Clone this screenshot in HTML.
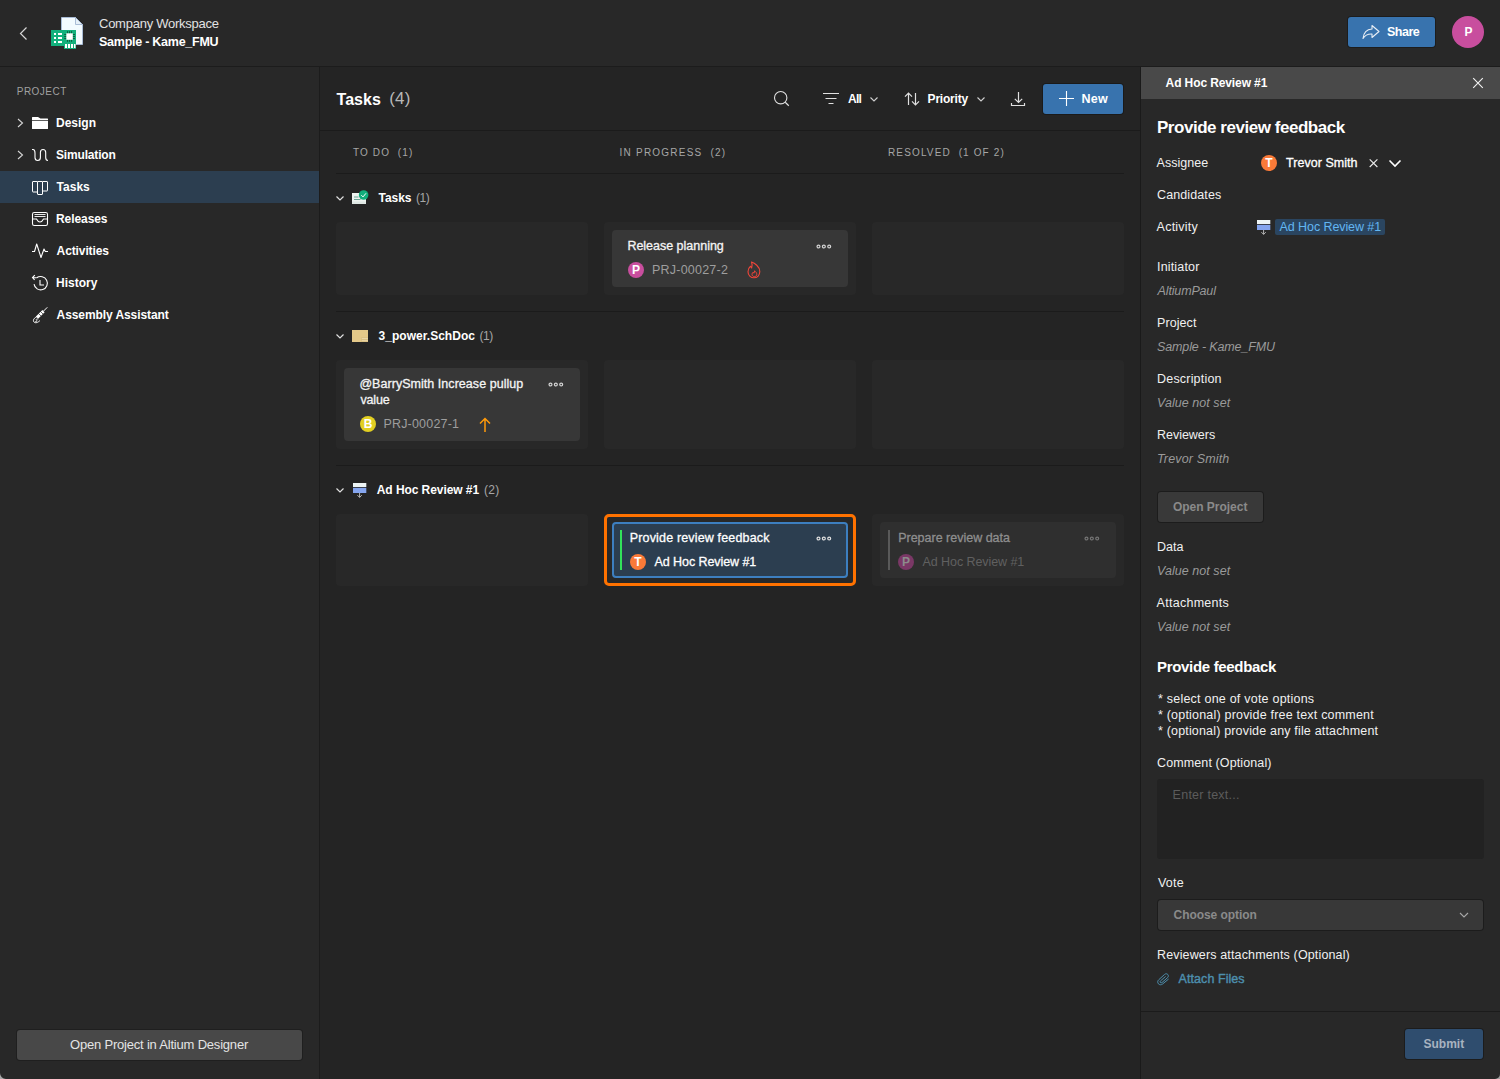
<!DOCTYPE html>
<html lang="en">
<head>
<meta charset="utf-8">
<title>Tasks - Sample - Kame_FMU</title>
<style>
*{box-sizing:border-box;margin:0;padding:0}
html,body{width:1500px;height:1079px;overflow:hidden;background:#282828}
body{font-family:"Liberation Sans",sans-serif;font-size:13px;color:#fff;position:relative}
.a{position:absolute}
.t{position:absolute;white-space:nowrap;line-height:16px;height:16px}
.lane{position:absolute;width:252px;background:#282828;border-radius:4px}
.card{position:absolute;width:236px;background:#373737;border-radius:4px}
.av{position:absolute;width:16px;height:16px;border-radius:50%}
.hl{position:absolute;height:1px;background:#1b1b1b}
</style>
</head>
<body>
<div id="bg">
<div class="a" style="left:0px;top:0px;width:1500px;height:66px;background:#282828;"></div>
<div class="a" style="left:0px;top:66px;width:1500px;height:1px;background:#1c1c1c;"></div>
<div class="a" style="left:0px;top:67px;width:319px;height:1012px;background:#282828;"></div>
<div class="a" style="left:319px;top:67px;width:1px;height:1012px;background:#1c1c1c;"></div>
<div class="a" style="left:320px;top:67px;width:820px;height:1012px;background:#242424;"></div>
<div class="a" style="left:1140px;top:67px;width:1px;height:1012px;background:#1a1a1a;"></div>
<div class="a" style="left:1141px;top:67px;width:359px;height:1012px;background:#282828;"></div>
</div>
<header aria-label="Project header">
<svg class="a" style="left:16px;top:23px" width="16" height="20" viewBox="0 0 16 20"><path d="M10.5 4.5 L4.5 10.5 L10.5 16.5" fill="none" stroke="#d6d6d6" stroke-width="1.2"/></svg>
<svg class="a" style="left:50px;top:16px" width="34" height="34" viewBox="0 0 34 34"><path d="M11.5 1.500 H25.500 L32.500 8.500 V28.500 H11.500 Z" fill="#f3fbff" stroke="#a9bcd6" stroke-width="1"/>
<path d="M25.500 1.500 V8.500 H32.500 Z" fill="#e6f0f8" stroke="#a9bcd6" stroke-width="1" stroke-linejoin="round"/>
<path d="M1 14 H26 V33 H14 V30 H1 Z" fill="#12b07c"/>
<rect x="4" y="17" width="2" height="2" fill="#fff"/><rect x="8" y="17" width="4" height="2" fill="#fff"/>
<rect x="4" y="21" width="2" height="2" fill="#fff"/><rect x="8" y="21" width="4" height="2" fill="#fff"/>
<rect x="4" y="25" width="2" height="2" fill="#fff"/><rect x="8" y="25" width="4" height="2" fill="#fff"/>
<path d="M17.500 15.200v10.600M19.500 15.200v10.600M21.500 15.200v10.600M14.200 18.500h10.800M14.200 20.500h10.800M14.200 22.500h10.800" stroke="#0b5f42" stroke-width="1"/>
<rect x="16.300" y="17.300" width="6.500" height="6.500" fill="#fff"/>
<path d="M15 28h2v4h-2zM18 28h2v4h-2zM21 28h2v4h-2zM24 28h1.500v4H24z" fill="#fff"/></svg>
<div class="a" style="left:1348px;top:17px;width:87px;height:30px;background:#3873ae;border-radius:3px;box-shadow:0 0 0 1px rgba(0,0,0,.28);"></div>
<svg class="a" style="left:1361px;top:23px" width="20" height="18" viewBox="0 0 20 18"><path d="M11 2.500 L18 8.500 L11 14.500 V11 C6.500 10.800 3.800 12.300 2 15.500 C2.600 9.800 5.800 6.300 11 6 Z" fill="none" stroke="#e8eef5" stroke-width="1.100" stroke-linejoin="round"/></svg>
<div class="a" style="left:1452px;top:16px;width:32px;height:32px;background:#c84e9e;border-radius:50%;"></div>
<div class="t" id="t0" style="left:99.00px;top:16.3px;font-size:13px;color:#e2e2e2;letter-spacing:-0.250px;">Company Workspace</div>
<div class="t" id="t1" style="left:99.00px;top:34.3px;font-size:12.5px;color:#fff;font-weight:bold;letter-spacing:-0.250px;">Sample - Kame_FMU</div>
<div class="t" id="t2" style="left:1387.00px;top:24.0px;font-size:12.5px;color:#fff;font-weight:bold;letter-spacing:-0.500px;">Share</div>
<div class="t" id="t3" style="left:1452.50px;top:24.0px;font-size:12px;color:#fff;font-weight:bold;width:32px;text-align:center;">P</div>
</header>
<nav aria-label="Project navigation">
<div class="a" style="left:0px;top:171px;width:319px;height:32px;background:#2c3e50;"></div>
<svg class="a" style="left:15px;top:117px" width="10" height="12" viewBox="0 0 10 12"><path d="M3 2 L7.500 6 L3 10" fill="none" stroke="#d6d6d6" stroke-width="1.1"/></svg>
<svg class="a" style="left:30px;top:113px" width="20" height="20" viewBox="0 0 20 20"><path d="M2 4.500 Q2 4 2.500 4 H8 L10.500 5.600 H17.500 Q18 5.600 18 6.100 V7.200 H2 Z" fill="#fff"/><path d="M2 8 H18 V15.500 Q18 16 17.500 16 H2.500 Q2 16 2 15.500 Z" fill="#fff"/></svg>
<svg class="a" style="left:15px;top:149px" width="10" height="12" viewBox="0 0 10 12"><path d="M3 2 L7.500 6 L3 10" fill="none" stroke="#d6d6d6" stroke-width="1.1"/></svg>
<svg class="a" style="left:30px;top:145px" width="20" height="20" viewBox="0 0 20 20"><path d="M2 4.500 H3 C4.800 4.500 5 6 5 8 V12.500 C5 14.500 6 15.500 7.700 15.500 C9.400 15.500 10.400 14.500 10.400 12.500 V7.500 C10.400 5.500 11.400 4.500 13 4.500 C14.600 4.500 15.700 5.500 15.700 7.500 V12.500 C15.700 14.500 16.300 15.500 18 15.500" fill="none" stroke="#fff" stroke-width="1.100"/></svg>
<svg class="a" style="left:30px;top:177px" width="20" height="20" viewBox="0 0 20 20"><path d="M7.500 4.500 H3 Q2.500 4.500 2.500 5 V14.500 Q2.500 15 3 15 H7.500 M12.500 4.500 H17 Q17.500 4.500 17.500 5 V13.500 Q17.500 14 17 14 H12.500" fill="none" stroke="#fff" stroke-width="1"/><rect x="7.500" y="4.500" width="5" height="13" rx="0.500" fill="none" stroke="#fff" stroke-width="1"/></svg>
<svg class="a" style="left:30px;top:209px" width="20" height="20" viewBox="0 0 20 20"><rect x="2.500" y="3.500" width="15" height="13" rx="1.800" fill="none" stroke="#fff" stroke-width="1.100"/><path d="M4.500 5.500H15.500M4.500 7.500H15.500" fill="none" stroke="#fff" stroke-width="0.900"/><path d="M2.500 10 H6.500 C7.500 12 8.500 13 10 13 C11.500 13 12.500 12 13.500 10 H17.500" fill="none" stroke="#fff" stroke-width="1.100"/></svg>
<svg class="a" style="left:30px;top:241px" width="20" height="20" viewBox="0 0 20 20"><path d="M2 10.500 H4.500 L6.700 3 L11 16.500 L14 8 L15.300 10.500 H18" fill="none" stroke="#fff" stroke-width="1.100" stroke-linejoin="round"/></svg>
<svg class="a" style="left:30px;top:273px" width="20" height="20" viewBox="0 0 20 20"><path d="M6.700 4.800 A6.700 6.700 0 1 1 4.050 11.200" fill="none" stroke="#fff" stroke-width="1.100"/><path d="M2.500 4.500 L6.700 4.800 M4.800 2.200 L2.500 4.500 L4.600 6.800" fill="none" stroke="#fff" stroke-width="1.100"/><path d="M10 7 V12 H14" fill="none" stroke="#fff" stroke-width="1.100"/></svg>
<svg class="a" style="left:30px;top:305px" width="20" height="20" viewBox="0 0 20 20"><path d="M17.300 2.300 L13.500 6.100" stroke="#fff" stroke-width="1" fill="none"/><path d="M13.500 6.100 L7 12.600" stroke="#fff" stroke-width="3.200" fill="none"/><path d="M10.300 6.300 L13.300 9.300 M8.300 8.300 L11.300 11.300" stroke="#282828" stroke-width="0.700"/><path d="M7.500 11.500 C4 12.500 2.500 15.500 4 17 C5.500 18.500 8 17.500 10 15.500" fill="none" stroke="#fff" stroke-width="1"/><path d="M8.200 14.200 C7 13.500 5.500 14.500 6.500 15.300 C7.500 16 6.500 17 5.300 16.500" fill="none" stroke="#fff" stroke-width="0.900"/></svg>
<div class="a" style="left:17px;top:1030px;width:285px;height:30px;background:#484848;border-radius:3px;box-shadow:0 0 0 1px #1f1f1f;"></div>
<div class="t" id="t4" style="left:16.79px;top:84.2px;font-size:10px;color:#a0a0a0;letter-spacing:0.467px;">PROJECT</div>
<div class="t" id="t5" style="left:56.00px;top:114.8px;font-size:12px;color:#fff;font-weight:bold;">Design</div>
<div class="t" id="t6" style="left:56.00px;top:146.8px;font-size:12px;color:#fff;font-weight:bold;letter-spacing:-0.167px;">Simulation</div>
<div class="t" id="t7" style="left:56.60px;top:178.8px;font-size:12px;color:#fff;font-weight:bold;">Tasks</div>
<div class="t" id="t8" style="left:56.00px;top:210.8px;font-size:12px;color:#fff;font-weight:bold;letter-spacing:-0.071px;">Releases</div>
<div class="t" id="t9" style="left:56.60px;top:242.8px;font-size:12px;color:#fff;font-weight:bold;letter-spacing:-0.111px;">Activities</div>
<div class="t" id="t10" style="left:56.00px;top:274.8px;font-size:12px;color:#fff;font-weight:bold;">History</div>
<div class="t" id="t11" style="left:56.60px;top:306.8px;font-size:12px;color:#fff;font-weight:bold;letter-spacing:-0.088px;">Assembly Assistant</div>
<div class="t" id="t12" style="left:70.00px;top:1036.5px;font-size:13px;color:#e4e4e4;letter-spacing:-0.200px;">Open Project in Altium Designer</div>
</nav>
<main aria-label="Tasks board">
<div class="a" style="left:320px;top:130px;width:820px;height:1px;background:#1b1b1b;"></div>
<svg class="a" style="left:772px;top:89px" width="20" height="20" viewBox="0 0 20 20"><circle cx="8.700" cy="8.700" r="6.200" fill="none" stroke="#e0e0e0" stroke-width="1.100"/><path d="M13.200 13.200 L16.800 16.700" stroke="#e0e0e0" stroke-width="1.200"/></svg>
<svg class="a" style="left:821px;top:88px" width="20" height="20" viewBox="0 0 20 20"><path d="M2 5.500H18M4.500 10.500H15.500M7.500 15.500H12.500" stroke="#e0e0e0" stroke-width="1.100"/></svg>
<svg class="a" style="left:869px;top:94px" width="10" height="10" viewBox="0 0 10 10"><path d="M1.500 3.500 L5 7 L8.500 3.500" fill="none" stroke="#d0d0d0" stroke-width="1.100"/></svg>
<svg class="a" style="left:903px;top:89px" width="18" height="20" viewBox="0 0 18 20"><path d="M5.500 16V4M2 7.600 L5.500 4 L9 7.600M12.500 4V16M9 12.400 L12.500 16 L16 12.400" fill="none" stroke="#e0e0e0" stroke-width="1.200"/></svg>
<svg class="a" style="left:976px;top:94px" width="10" height="10" viewBox="0 0 10 10"><path d="M1.500 3.500 L5 7 L8.500 3.500" fill="none" stroke="#d0d0d0" stroke-width="1.100"/></svg>
<svg class="a" style="left:1009px;top:89px" width="18" height="20" viewBox="0 0 18 20"><path d="M9.500 3V13.500M5.800 9.800 L9.500 13.500 L13.200 9.800M2.500 14V16.500H15.500V14" fill="none" stroke="#e0e0e0" stroke-width="1.200"/></svg>
<div class="a" style="left:1043px;top:84px;width:80px;height:30px;background:#3873ae;border-radius:3px;box-shadow:0 0 0 1px rgba(0,0,0,.28);"></div>
<svg class="a" style="left:1058px;top:91px" width="17" height="16" viewBox="0 0 17 16"><path d="M8.500 0V15M1 7.500H16" stroke="#fff" stroke-width="1.100"/></svg>
<div class="a" style="left:336px;top:173px;width:788px;height:1px;background:#1b1b1b;"></div>
<div class="a" style="left:336px;top:311px;width:788px;height:1px;background:#1b1b1b;"></div>
<div class="a" style="left:336px;top:465px;width:788px;height:1px;background:#1b1b1b;"></div>
<svg class="a" style="left:335px;top:192.5px" width="10" height="10" viewBox="0 0 10 10"><path d="M1.500 3.500 L5 7 L8.500 3.500" fill="none" stroke="#e0e0e0" stroke-width="1.200"/></svg>
<svg class="a" style="left:335px;top:330.5px" width="10" height="10" viewBox="0 0 10 10"><path d="M1.500 3.500 L5 7 L8.500 3.500" fill="none" stroke="#e0e0e0" stroke-width="1.200"/></svg>
<svg class="a" style="left:335px;top:484.5px" width="10" height="10" viewBox="0 0 10 10"><path d="M1.500 3.500 L5 7 L8.500 3.500" fill="none" stroke="#e0e0e0" stroke-width="1.200"/></svg>
<svg class="a" style="left:352px;top:189px" width="17" height="16" viewBox="0 0 17 16"><path d="M0 4H14V15H0Z" fill="#eef3f0"/><path d="M2 8H6.500M2 10.500H8.500" stroke="#6aa595" stroke-width="1.200"/><path d="M0 12.500H14V15H0Z" fill="#dfe8e4"/><circle cx="11.600" cy="6" r="4.800" fill="#12ad7b"/><path d="M9.300 6.200 L11 7.900 L14 4.300" fill="none" stroke="#fff" stroke-width="1"/></svg>
<svg class="a" style="left:352px;top:330px" width="17" height="12" viewBox="0 0 17 12"><rect x="0" y="0" width="16" height="12" fill="#e4c989"/><rect x="9.200" y="7.300" width="6.800" height="4.700" fill="#d9bf80"/><path d="M9.800 8.600H16M9.800 10.700H16" stroke="#efdcae" stroke-width="0.900"/></svg>
<svg class="a" style="left:352px;top:483px" width="15" height="15" viewBox="0 0 15 15"><rect x="1" y="0" width="13.300" height="4" fill="#eef5f5"/><rect x="1" y="4" width="13.300" height="1" fill="#39404f"/><rect x="1" y="5" width="13.300" height="5" fill="#85a5ee"/><path d="M7.600 10V14.300M5.400 12.200 L7.600 14.400 L9.800 12.200" fill="none" stroke="#b5b5b5" stroke-width="1"/></svg>
<div class="lane" style="left:336px;top:222px;height:73px"></div>
<div class="lane" style="left:336px;top:360px;height:89px"></div>
<div class="lane" style="left:336px;top:514px;height:72px"></div>
<div class="lane" style="left:604px;top:222px;height:73px"></div>
<div class="lane" style="left:604px;top:360px;height:89px"></div>
<div class="lane" style="left:604px;top:514px;height:72px"></div>
<div class="lane" style="left:872px;top:222px;height:73px"></div>
<div class="lane" style="left:872px;top:360px;height:89px"></div>
<div class="lane" style="left:872px;top:514px;height:72px"></div>
<div class="card" style="left:612px;top:230px;height:57px"></div>
<svg class="a" style="left:816.1px;top:243.5px" width="16" height="5" viewBox="0 0 16 5"><circle cx="2.500" cy="2.500" r="1.450" fill="none" stroke="#d4d4d4" stroke-width="1.200"/><circle cx="7.850" cy="2.500" r="1.450" fill="none" stroke="#d4d4d4" stroke-width="1.200"/><circle cx="13.200" cy="2.500" r="1.450" fill="none" stroke="#d4d4d4" stroke-width="1.200"/></svg>
<div class="a" style="left:628px;top:261.5px;width:16px;height:16px;background:#c84e9e;border-radius:50%;"></div>
<svg class="a" style="left:746px;top:260px" width="16" height="20" viewBox="0 0 16 20"><path d="M5.500 2 C8.500 3 13.800 6.500 13.800 11.500 C13.800 15.200 11.300 17.800 8 17.800 C4.700 17.800 2 15.200 2 11.800 C2 9.500 3 7.500 4.500 6.300 L5.600 8 C6.300 6 6.300 4 5.500 2 Z" fill="none" stroke="#f0453a" stroke-width="1.100" stroke-linejoin="round"/><path d="M8.600 10.800 C10 12 10.800 13 10.800 14.300 C10.800 15.800 9.600 16.600 8.400 16.600 C7 16.600 6 15.600 6 14.300 C6 13.400 6.500 12.600 7.200 12.200 L7.800 13.200 C8.300 12.500 8.600 11.700 8.600 10.800 Z" fill="none" stroke="#f0453a" stroke-width="1" stroke-linejoin="round"/></svg>
<div class="card" style="left:344px;top:368px;height:73px"></div>
<svg class="a" style="left:548.1px;top:381.8px" width="16" height="5" viewBox="0 0 16 5"><circle cx="2.500" cy="2.500" r="1.450" fill="none" stroke="#d4d4d4" stroke-width="1.200"/><circle cx="7.850" cy="2.500" r="1.450" fill="none" stroke="#d4d4d4" stroke-width="1.200"/><circle cx="13.200" cy="2.500" r="1.450" fill="none" stroke="#d4d4d4" stroke-width="1.200"/></svg>
<div class="a" style="left:360px;top:416px;width:16px;height:16px;background:#e2cf22;border-radius:50%;"></div>
<svg class="a" style="left:478px;top:416px" width="14" height="17" viewBox="0 0 14 17"><path d="M7 16V2.500M2 7.500 L7 2.500 L12 7.500" fill="none" stroke="#ff9a0a" stroke-width="1.500"/></svg>
<div class="a" style="left:604px;top:514px;width:252px;height:72px;background:transparent;border:3px solid #ff7200;border-radius:5px;"></div>
<div class="a" style="left:612px;top:522px;width:236px;height:56px;background:#2c3e50;border:2px solid #3d7fc0;border-radius:4px;"></div>
<div class="a" style="left:620px;top:530px;width:2.3px;height:40px;background:#32e35a;"></div>
<svg class="a" style="left:816.1px;top:535.5px" width="16" height="5" viewBox="0 0 16 5"><circle cx="2.500" cy="2.500" r="1.450" fill="none" stroke="#e0e0e0" stroke-width="1.200"/><circle cx="7.850" cy="2.500" r="1.450" fill="none" stroke="#e0e0e0" stroke-width="1.200"/><circle cx="13.200" cy="2.500" r="1.450" fill="none" stroke="#e0e0e0" stroke-width="1.200"/></svg>
<div class="a" style="left:630px;top:553.5px;width:16px;height:16px;background:#fa7a38;border-radius:50%;"></div>
<div class="card" style="left:880px;top:522px;height:56px;background:#2f2f2f"></div>
<div class="a" style="left:888px;top:530px;width:2px;height:40px;background:#5a5a5a;"></div>
<svg class="a" style="left:1084.1px;top:535.5px" width="16" height="5" viewBox="0 0 16 5"><circle cx="2.500" cy="2.500" r="1.450" fill="none" stroke="#757575" stroke-width="1.200"/><circle cx="7.850" cy="2.500" r="1.450" fill="none" stroke="#757575" stroke-width="1.200"/><circle cx="13.200" cy="2.500" r="1.450" fill="none" stroke="#757575" stroke-width="1.200"/></svg>
<div class="a" style="left:898px;top:553.5px;width:16px;height:16px;background:#7a3866;border-radius:50%;"></div>
<div class="t" id="t13" style="left:336.60px;top:89.6px;font-size:16px;color:#fff;line-height:20px;height:20px;font-weight:bold;">Tasks</div>
<div class="t" id="t14" style="left:389.19px;top:89.4px;font-size:17px;color:#b8b8b8;line-height:20px;height:20px;letter-spacing:0.200px;">(4)</div>
<div class="t" id="t15" style="left:848.00px;top:90.5px;font-size:12px;color:#fff;font-weight:bold;letter-spacing:-0.750px;">All</div>
<div class="t" id="t16" style="left:927.60px;top:90.5px;font-size:12px;color:#fff;font-weight:bold;letter-spacing:-0.214px;">Priority</div>
<div class="t" id="t17" style="left:1081.60px;top:90.5px;font-size:12.5px;color:#fff;font-weight:bold;letter-spacing:0.200px;">New</div>
<div class="t" id="t18" style="left:353.00px;top:145.4px;font-size:10px;color:#a6a6a6;letter-spacing:1.111px;white-space:pre;">TO DO  (1)</div>
<div class="t" id="t19" style="left:619.60px;top:145.4px;font-size:10px;color:#a6a6a6;letter-spacing:1.220px;white-space:pre;">IN PROGRESS  (2)</div>
<div class="t" id="t20" style="left:888.00px;top:145.4px;font-size:10px;color:#a6a6a6;letter-spacing:1.135px;white-space:pre;">RESOLVED  (1 OF 2)</div>
<div class="t" id="t21" style="left:378.60px;top:189.5px;font-size:12px;color:#fff;font-weight:bold;letter-spacing:-0.075px;">Tasks</div>
<div class="t" id="t22" style="left:416.00px;top:189.5px;font-size:12px;color:#a6a6a6;letter-spacing:-0.400px;">(1)</div>
<div class="t" id="t23" style="left:627.39px;top:237.5px;font-size:12.5px;color:#f4f4f4;letter-spacing:-0.013px;-webkit-text-stroke:0.3px;">Release planning</div>
<div class="t" id="t24" style="left:628.00px;top:261.5px;font-size:12px;color:#fff;font-weight:bold;width:16px;text-align:center;">P</div>
<div class="t" id="t25" style="left:652.00px;top:261.5px;font-size:12.5px;color:#9e9e9e;letter-spacing:0.220px;">PRJ-00027-2</div>
<div class="t" id="t26" style="left:378.60px;top:327.5px;font-size:12px;color:#fff;font-weight:bold;letter-spacing:0.023px;">3_power.SchDoc</div>
<div class="t" id="t27" style="left:479.39px;top:327.5px;font-size:12px;color:#a6a6a6;letter-spacing:-0.400px;">(1)</div>
<div class="t" id="t28" style="left:359.39px;top:375.8px;font-size:12.5px;color:#f4f4f4;letter-spacing:0.042px;-webkit-text-stroke:0.3px;">@BarrySmith Increase pullup</div>
<div class="t" id="t29" style="left:360.39px;top:391.6px;font-size:12.5px;color:#f4f4f4;letter-spacing:-0.125px;-webkit-text-stroke:0.3px;">value</div>
<div class="t" id="t30" style="left:360.00px;top:416.0px;font-size:12px;color:#fff;font-weight:bold;width:16px;text-align:center;">B</div>
<div class="t" id="t31" style="left:383.39px;top:416.0px;font-size:12.5px;color:#9e9e9e;letter-spacing:0.200px;">PRJ-00027-1</div>
<div class="t" id="t32" style="left:376.79px;top:481.5px;font-size:12px;color:#fff;font-weight:bold;letter-spacing:-0.073px;">Ad Hoc Review #1</div>
<div class="t" id="t33" style="left:484.00px;top:481.5px;font-size:12px;color:#a6a6a6;letter-spacing:0.350px;">(2)</div>
<div class="t" id="t34" style="left:629.79px;top:529.5px;font-size:12.5px;color:#fff;letter-spacing:0.159px;-webkit-text-stroke:0.3px;">Provide review feedback</div>
<div class="t" id="t35" style="left:630.00px;top:553.5px;font-size:12px;color:#fff;font-weight:bold;width:16px;text-align:center;">T</div>
<div class="t" id="t36" style="left:654.60px;top:553.5px;font-size:12.5px;color:#fff;letter-spacing:-0.080px;-webkit-text-stroke:0.3px;">Ad Hoc Review #1</div>
<div class="t" id="t37" style="left:898.19px;top:529.5px;font-size:12.5px;color:#8e8e8e;letter-spacing:-0.006px;-webkit-text-stroke:0.3px;">Prepare review data</div>
<div class="t" id="t38" style="left:898.00px;top:553.5px;font-size:12px;color:#8c8c8c;font-weight:bold;width:16px;text-align:center;">P</div>
<div class="t" id="t39" style="left:922.60px;top:553.5px;font-size:12.5px;color:#606060;letter-spacing:-0.080px;">Ad Hoc Review #1</div>
</main>
<aside aria-label="Task details">
<div class="a" style="left:1141px;top:67px;width:359px;height:32px;background:#494949;"></div>
<svg class="a" style="left:1471px;top:76px" width="14" height="14" viewBox="0 0 14 14"><path d="M2.200 2.200 L11.800 11.800 M11.800 2.200 L2.200 11.800" stroke="#f4f4f4" stroke-width="1.100"/></svg>
<div class="a" style="left:1261px;top:155px;width:16px;height:16px;background:#fa7a38;border-radius:50%;"></div>
<svg class="a" style="left:1367.5px;top:158px" width="11" height="11" viewBox="0 0 11 11"><path d="M1.700 1.300 L9.400 9 M9.400 1.300 L1.700 9" stroke="#ececec" stroke-width="1.100"/></svg>
<svg class="a" style="left:1388px;top:158px" width="14" height="11" viewBox="0 0 14 11"><path d="M1.500 2.500 L7 8 L12.500 2.500" fill="none" stroke="#fff" stroke-width="1.600"/></svg>
<svg class="a" style="left:1256px;top:220px" width="15" height="15" viewBox="0 0 15 15"><rect x="1" y="0" width="13.300" height="4" fill="#eef5f5"/><rect x="1" y="4" width="13.300" height="1" fill="#39404f"/><rect x="1" y="5" width="13.300" height="5" fill="#85a5ee"/><path d="M7.600 10V14.300M5.400 12.200 L7.600 14.400 L9.800 12.200" fill="none" stroke="#b5b5b5" stroke-width="1"/></svg>
<div class="a" style="left:1275px;top:219px;width:110px;height:16px;background:#2a4560;border-radius:2px;"></div>
<div class="a" style="left:1158px;top:492px;width:105px;height:30px;background:#393939;border-radius:3px;box-shadow:0 0 0 1px rgba(0,0,0,.28);"></div>
<div class="a" style="left:1157px;top:779px;width:327px;height:80px;background:#222222;border-radius:3px;"></div>
<div class="a" style="left:1158px;top:900px;width:325px;height:30px;background:#383838;border-radius:3px;box-shadow:0 0 0 1px rgba(0,0,0,.28);"></div>
<svg class="a" style="left:1459px;top:910px" width="10" height="10" viewBox="0 0 10 10"><path d="M1 3 L5 7 L9 3" fill="none" stroke="#a8a8a8" stroke-width="1.100"/></svg>
<svg class="a" style="left:1156px;top:972px" width="14" height="14" viewBox="0 0 14 14"><path d="M12.300 7.300 L6.600 12 C5.200 13.100 3.400 13 2.400 11.800 C1.400 10.600 1.500 8.900 2.700 7.800 L8.600 2.400 C9.600 1.500 11 1.600 11.800 2.500 C12.600 3.400 12.500 4.800 11.600 5.600 L5.900 10.600 C5.400 11 4.700 11 4.300 10.500 C3.900 10 4 9.400 4.400 9 L9.300 4.700" fill="none" stroke="#4d8fae" stroke-width="1" stroke-linecap="round"/></svg>
<div class="a" style="left:1141px;top:1011px;width:359px;height:1px;background:#1b1b1b;"></div>
<div class="a" style="left:1405px;top:1029px;width:78px;height:30px;background:#2f4d6e;border-radius:3px;box-shadow:0 0 0 1px rgba(0,0,0,.28);"></div>
<div class="t" id="t40" style="left:1165.60px;top:74.8px;font-size:12px;color:#fff;font-weight:bold;letter-spacing:-0.107px;">Ad Hoc Review #1</div>
<div class="t" id="t41" style="left:1157.00px;top:118.0px;font-size:17px;color:#fff;line-height:20px;height:20px;font-weight:bold;letter-spacing:-0.464px;">Provide review feedback</div>
<div class="t" id="t42" style="left:1156.60px;top:154.8px;font-size:12.5px;color:#f0f0f0;letter-spacing:0.029px;">Assignee</div>
<div class="t" id="t43" style="left:1261.00px;top:155.0px;font-size:12px;color:#fff;font-weight:bold;width:16px;text-align:center;">T</div>
<div class="t" id="t44" style="left:1286.00px;top:154.8px;font-size:12.5px;color:#fff;letter-spacing:0.036px;-webkit-text-stroke:0.3px;">Trevor Smith</div>
<div class="t" id="t45" style="left:1157.00px;top:186.8px;font-size:12.5px;color:#f0f0f0;letter-spacing:0.111px;">Candidates</div>
<div class="t" id="t46" style="left:1156.60px;top:218.8px;font-size:12.5px;color:#f0f0f0;letter-spacing:0.229px;">Activity</div>
<div class="t" id="t47" style="left:1279.60px;top:218.8px;font-size:12.5px;color:#62b6f2;letter-spacing:-0.087px;">Ad Hoc Review #1</div>
<div class="t" id="t48" style="left:1157.00px;top:258.8px;font-size:12.5px;color:#f0f0f0;letter-spacing:0.175px;">Initiator</div>
<div class="t" id="t49" style="left:1157.60px;top:282.8px;font-size:12.5px;color:#9a9a9a;font-style:italic;letter-spacing:-0.156px;">AltiumPaul</div>
<div class="t" id="t50" style="left:1157.00px;top:314.8px;font-size:12.5px;color:#f0f0f0;letter-spacing:0.083px;">Project</div>
<div class="t" id="t51" style="left:1157.00px;top:338.8px;font-size:12.5px;color:#9a9a9a;font-style:italic;letter-spacing:-0.131px;">Sample - Kame_FMU</div>
<div class="t" id="t52" style="left:1157.00px;top:370.8px;font-size:12.5px;color:#f0f0f0;letter-spacing:0.200px;">Description</div>
<div class="t" id="t53" style="left:1157.00px;top:394.8px;font-size:12.5px;color:#9a9a9a;font-style:italic;letter-spacing:0.050px;">Value not set</div>
<div class="t" id="t54" style="left:1157.00px;top:426.8px;font-size:12.5px;color:#f0f0f0;letter-spacing:-0.025px;">Reviewers</div>
<div class="t" id="t55" style="left:1157.00px;top:450.8px;font-size:12.5px;color:#9a9a9a;font-style:italic;letter-spacing:0.155px;">Trevor Smith</div>
<div class="t" id="t56" style="left:1173.00px;top:498.8px;font-size:12px;color:#8a8a8a;font-weight:bold;letter-spacing:-0.027px;">Open Project</div>
<div class="t" id="t57" style="left:1157.00px;top:538.8px;font-size:12.5px;color:#f0f0f0;">Data</div>
<div class="t" id="t58" style="left:1157.00px;top:562.8px;font-size:12.5px;color:#9a9a9a;font-style:italic;letter-spacing:0.050px;">Value not set</div>
<div class="t" id="t59" style="left:1156.60px;top:594.8px;font-size:12.5px;color:#f0f0f0;letter-spacing:0.270px;">Attachments</div>
<div class="t" id="t60" style="left:1157.00px;top:618.8px;font-size:12.5px;color:#9a9a9a;font-style:italic;letter-spacing:0.050px;">Value not set</div>
<div class="t" id="t61" style="left:1157.00px;top:658.0px;font-size:15px;color:#fff;line-height:18px;height:18px;font-weight:bold;letter-spacing:-0.320px;">Provide feedback</div>
<div class="t" id="t62" style="left:1158.00px;top:690.8px;font-size:12.5px;color:#f0f0f0;letter-spacing:0.222px;">* select one of vote options</div>
<div class="t" id="t63" style="left:1158.00px;top:706.8px;font-size:12.5px;color:#f0f0f0;letter-spacing:0.197px;">* (optional) provide free text comment</div>
<div class="t" id="t64" style="left:1158.00px;top:722.8px;font-size:12.5px;color:#f0f0f0;letter-spacing:0.172px;">* (optional) provide any file attachment</div>
<div class="t" id="t65" style="left:1157.00px;top:754.8px;font-size:12.5px;color:#f0f0f0;letter-spacing:0.112px;">Comment (Optional)</div>
<div class="t" id="t66" style="left:1172.60px;top:786.8px;font-size:12.5px;color:#5c5c5c;letter-spacing:0.250px;">Enter text...</div>
<div class="t" id="t67" style="left:1158.00px;top:874.8px;font-size:12.5px;color:#f0f0f0;letter-spacing:0.200px;">Vote</div>
<div class="t" id="t68" style="left:1173.60px;top:906.8px;font-size:12px;color:#8a8a8a;font-weight:bold;letter-spacing:-0.067px;">Choose option</div>
<div class="t" id="t69" style="left:1157.00px;top:946.8px;font-size:12.5px;color:#f0f0f0;letter-spacing:0.145px;">Reviewers attachments (Optional)</div>
<div class="t" id="t70" style="left:1178.60px;top:970.8px;font-size:12.5px;color:#4d8fae;letter-spacing:0.064px;-webkit-text-stroke:0.4px;">Attach Files</div>
<div class="t" id="t71" style="left:1423.39px;top:1035.8px;font-size:12px;color:#a8b3c0;font-weight:bold;letter-spacing:0.040px;">Submit</div>
</aside>
<svg class="a" style="left:0px;top:1073px" width="6" height="6" viewBox="0 0 6 6"><path d="M0 0 V6 H6 A6 6 0 0 1 0 0 Z" fill="#a8a8a8"/></svg>
<svg class="a" style="left:1495px;top:1074px" width="5" height="5" viewBox="0 0 5 5"><path d="M5 0 V5 H0 A5 5 0 0 0 5 0 Z" fill="#a0a0a0"/></svg>

</body>
</html>
